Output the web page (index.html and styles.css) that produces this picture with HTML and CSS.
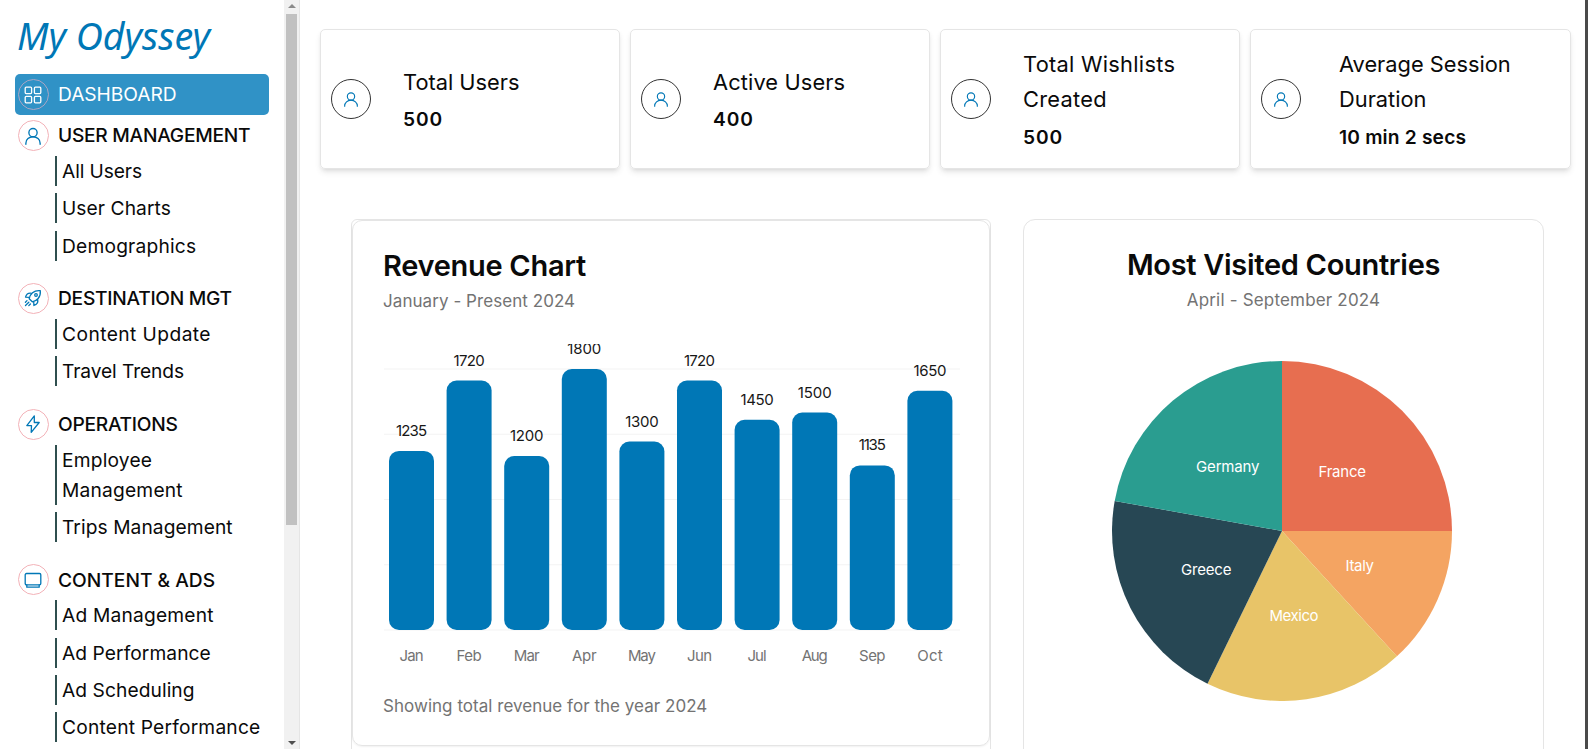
FILE: index.html
```html
<!DOCTYPE html>
<html lang="en">
<head>
<meta charset="utf-8">
<title>My Odyssey</title>
<link rel="stylesheet" href="styles.css">
</head>
<body>
<svg width="0" height="0" class="defs">
  <symbol id="user" viewBox="0 0 24 24"><circle cx="12" cy="7.5" r="5.5"/><path d="M2.500 23v-1.500a9.500 8.500 0 0 1 19 0V23"/></symbol>
</svg>
<div class="app">
  <aside class="sidebar">
    <nav class="nav">
      <div class="logo">My Odyssey</div>
      <div class="head active"><span class="ring"><svg viewBox="0 0 18 18"><rect x="1.2" y="1.2" width="6.4" height="6.4" rx="1"/><rect x="10.4" y="1.2" width="6.4" height="6.4" rx="1"/><rect x="1.2" y="10.4" width="6.4" height="6.4" rx="1"/><rect x="10.4" y="10.4" width="6.4" height="6.4" rx="1"/></svg></span><span class="t">DASHBOARD</span></div>
      <section class="group">
        <div class="head"><span class="ring"><svg class="person"><use href="#user"/></svg></span><span class="t">USER MANAGEMENT</span></div>
        <ul class="items"><li class="snug">All Users</li><li>User Charts</li><li class="loose">Demographics</li></ul>
      </section>
      <section class="group">
        <div class="head"><span class="ring"><svg viewBox="0 0 18 18"><path d="M5.2 9.7C6 5.5 9.500 1 16.300 1.700 17 8.500 12.500 12 8.300 12.800zM5.700 8.300 1.500 8.100C2.400 5.200 4.400 3.700 7.600 4.300M9.700 12.300 9.900 16.500C12.800 15.600 14.300 13.600 13.700 10.400M1.400 13.200l1.600-1.600M1.500 16.500l3.300-3.300M4.800 16.600l1.600-1.600"/><circle cx="12" cy="6" r="1.300"/></svg></span><span class="t">DESTINATION MGT</span></div>
        <ul class="items"><li class="looser">Content Update</li><li class="snug">Travel Trends</li></ul>
      </section>
      <section class="group">
        <div class="head"><span class="ring"><svg viewBox="0 0 18 18"><path d="M10.300.8 2.800 10.600h4.700L7.200 17.300 15.200 7.500h-4.900z"/></svg></span><span class="t">OPERATIONS</span></div>
        <ul class="items"><li class="loose">Employee<br>Management</li><li>Trips Management</li></ul>
      </section>
      <section class="group">
        <div class="head"><span class="ring"><svg viewBox="0 0 18 18"><rect x="1.200" y="2.500" width="15.600" height="11.300" rx="1.300"/><path d="M2.800 14v2.200h12.400V14"/></svg></span><span class="t even">CONTENT &amp; ADS</span></div>
        <ul class="items"><li class="loose">Ad Management</li><li>Ad Performance</li><li>Ad Scheduling</li><li class="loose">Content Performance</li></ul>
      </section>
    </nav>
    <div class="scrollbar"><i class="up"></i><i class="thumb"></i><i class="down"></i></div>
  </aside>
  <main class="main">
    <div class="stats">
      <article class="stat"><span class="badge"><svg><use href="#user"/></svg></span><div><h3>Total Users</h3><b>500</b></div></article>
      <article class="stat"><span class="badge"><svg><use href="#user"/></svg></span><div><h3 class="loose">Active Users</h3><b>400</b></div></article>
      <article class="stat"><span class="badge"><svg><use href="#user"/></svg></span><div><h3 class="looser">Total Wishlists<br>Created</h3><b>500</b></div></article>
      <article class="stat wide"><span class="badge"><svg><use href="#user"/></svg></span><div><h3>Average Session<br>Duration</h3><b class="loose">10 min 2 secs</b></div></article>
    </div>
    <div class="charts">
      <div class="frame">
        <section class="revenue">
          <h2>Revenue Chart</h2>
          <p class="sub">January - Present 2024</p>
          <svg class="bars" id="bars" width="577" height="325"></svg>
          <p class="foot">Showing total revenue for the year 2024</p>
        </section>
      </div>
      <section class="visited">
        <h2>Most Visited Countries</h2>
        <p class="sub">April - September 2024</p>
        <svg class="pie" width="340" height="340" viewBox="-170 -170 340 340">
          <path fill="#e76e50" d="M0 0V-170A170 170 0 0 1 170 0z"/>
          <path fill="#f4a462" d="M0 0H170A170 170 0 0 1 114.900 125.300z"/>
          <path fill="#e8c468" d="M0 0 114.900 125.300A170 170 0 0 1-74.500 152.800z"/>
          <path fill="#274754" d="M0 0-74.500 152.800A170 170 0 0 1-167.300-30.100z"/>
          <path fill="#2a9d90" d="M0 0-167.300-30.100A170 170 0 0 1 0-170z"/>
          <text x="-86" y="-59.500" textLength="63.500">Germany</text>
          <text x="36.500" y="-54.500" textLength="47.500">France</text>
          <text x="63.500" y="39.500" textLength="28.500">Italy</text>
          <text x="-101" y="43.500" textLength="50.500">Greece</text>
          <text x="-12.500" y="89.500" textLength="49">Mexico</text>
        </svg>
      </section>
    </div>
  </main>
  <div class="edge"></div>
</div>
<script src="chart.js"></script>
</body>
</html>
```
FILE: styles.css
```css
* { box-sizing: border-box; margin: 0; padding: 0; }
body { width: 1588px; height: 749px; overflow: hidden; background: #fff; color: #0a0a0a; font-family: Inter, "Open Sans", sans-serif; }
.defs { position: absolute; }
.app { display: flex; height: 749px; }
.sidebar { display: flex; width: 301px; height: 749px; overflow: hidden; }
.nav { width: 284px; padding: 0 15px; }
.logo { height: 74px; padding-left: 2px; font: italic 400 37.5px/72px "Noto Sans", sans-serif; color: #0077b6; white-space: nowrap; }
.head { display: flex; align-items: center; height: 41px; padding-left: 2.500px; font-size: 19.2px; font-weight: 500; letter-spacing: -.27px; white-space: nowrap; }
.head .t { margin: -1px 0 0 9.500px; }
.head .even { margin-top: 0; letter-spacing: 0; }
.active { width: 254px; border-radius: 5px; background: #3092c6; color: #fff; font-weight: 400; letter-spacing: -.05px; }
.ring { display: grid; place-items: center; flex: none; width: 31px; height: 31px; border: 1px solid #f3b2b8; border-radius: 50%; }
.active .ring { border-color: #aaa5c4; }
.ring svg { width: 18px; height: 18px; fill: none; stroke: #0077b6; stroke-width: 1.3; stroke-linejoin: round; stroke-linecap: round; }
.ring .person { stroke-width: 1.8; }
.active .ring svg { stroke: #fff; }
.group { margin-bottom: 17.200px; }
.items { display: flex; flex-direction: column; gap: 7.400px; padding-left: 40px; list-style: none; font-size: 19.200px; line-height: 30px; white-space: nowrap; }
.items li { padding-left: 5px; border-left: 2px solid #2f4f4f; letter-spacing: .07px; }
.items .snug { letter-spacing: -.1px; }
.items .loose { letter-spacing: .2px; }
.items .looser { letter-spacing: .43px; }
.scrollbar { display: flex; flex-direction: column; align-items: center; width: 16px; height: 749px; background: #f1f1f1; border-right: 1px solid #e5e5e5; }
.up, .down { width: 0; height: 4px; border: 4px solid transparent; }
.up { margin: 4px 0 6px; border-bottom-color: #8a8a8a; border-top-width: 0; }
.thumb { width: 11px; height: 511px; background: #c1c1c1; }
.down { margin-top: auto; margin-bottom: 4px; border-top-color: #505050; border-bottom-width: 0; }
.main { flex: 1; padding: 29px 14px 0 20px; }
.stats { display: grid; grid-template-columns: 300px 300px 300px 321px; column-gap: 10px; height: 140px; }
.stat { display: flex; align-items: center; padding-left: 10px; border: 1px solid #e5e5e5; border-radius: 5px; box-shadow: 0 4px 6px -1px rgba(0,0,0,.1), 0 2px 4px -2px rgba(0,0,0,.1); white-space: nowrap; }
.badge { display: grid; place-items: center; flex: none; width: 40px; height: 40px; margin-right: 32px; border: 1px solid #333; border-radius: 50%; }
.wide .badge { margin-right: 38px; }
.badge svg { width: 16px; height: 17px; fill: none; stroke: #0077b6; stroke-width: 1.700; }
.stat h3 { padding-top: 3px; font-size: 21.800px; font-weight: 400; line-height: 35.300px; }
.stat h3.loose { letter-spacing: .12px; }
.stat h3.looser { letter-spacing: .28px; }
.stat b { display: block; margin-top: 2.500px; font-size: 19.200px; font-weight: 600; line-height: 34px; letter-spacing: .9px; }
.stat b.loose { letter-spacing: .18px; }
.charts { display: flex; align-items: flex-start; margin: 50px 0 0 31px; }
.frame { width: 640px; height: 560px; border: 1px solid #e5e5e5; border-radius: 6px 6px 0 0; }
.revenue { height: 526px; padding: 27px 0 0 30px; border: 1px solid #e5e5e5; border-radius: 10px; box-shadow: 0 1px 2px rgba(0,0,0,.06); }
h2 { font-size: 29px; font-weight: 600; line-height: 36px; letter-spacing: -.3px; white-space: nowrap; }
.sub, .foot { font-size: 17px; line-height: 26px; color: #737373; white-space: nowrap; letter-spacing: .06px; }
.sub { margin-top: 4px; }
.visited .sub { letter-spacing: .18px; }
.foot { margin-top: 24px; letter-spacing: .03px; }
.bars { display: block; margin: 30px 0 0 .5px; overflow: hidden; }
.bars line { stroke: #f3f3f3; }
.bars rect { fill: #0077b6; }
.bars text { font-size: 15px; text-anchor: middle; fill: #171717; }
.bars .month { fill: #737373; }
.visited { width: 521px; height: 560px; margin-left: 32px; padding-top: 27px; border: 1px solid #e5e5e5; border-radius: 12px 12px 0 0; text-align: center; }
.pie { display: block; margin: 48px auto 0 88px; }
.pie text { font-size: 15px; fill: #fff; text-anchor: start; }
.edge { width: 3px; background: #4a4a4a; }
```
FILE: chart.js
```js
const data = [["Jan",1235,31,24],["Feb",1720,31,25],["Mar",1200,33.5,26],["Apr",1800,34,24.5],["May",1300,33.5,28],["Jun",1720,31,25],["Jul",1450,33,19],["Aug",1500,34,26],["Sep",1135,27,26.500],["Oct",1650,33,25.500]];
let out = "";
for (let i = 0; i < 5; i++) out += `<line x1="0" x2="576" y1="${25 + i * 65.25}" y2="${25 + i * 65.25}"/>`;
data.forEach(([m, v, vw, mw], i) => {
  const x = 5 + i * 57.6, h = v * 0.145;
  out += `<rect x="${x}" y="${286 - h}" width="45" height="${h}" rx="10"/>`;
  out += `<text x="${x + 22.5}" y="${271 - h}" textLength="${vw}">${v}</text>`;
  out += `<text class="month" x="${x + 22.5}" y="317" textLength="${mw}">${m}</text>`;
});
document.getElementById("bars").innerHTML = out;
```
